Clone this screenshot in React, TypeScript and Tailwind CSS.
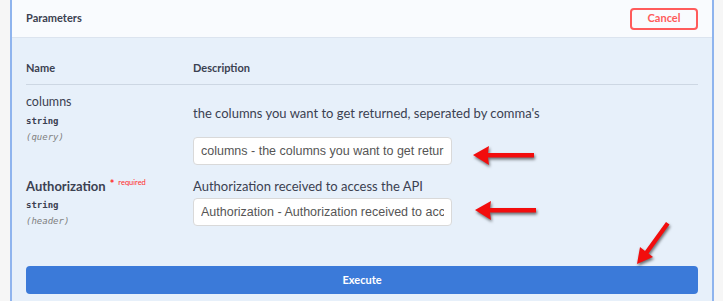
import React from "react";

const sans = "font-['Lato','Open_Sans',sans-serif]";
const mono = "font-['DejaVu_Sans_Mono','Liberation_Mono',monospace]";

function Arrow({ className, d }: { className: string; d: string }) {
  return (
    <svg
      className={`absolute ${className}`}
      viewBox="0 0 80 60"
      width="80"
      height="60"
      style={{ filter: "drop-shadow(1px 2px 1.5px rgba(0,0,0,0.55))" }}
    >
      <path d={d} fill="#f20d0d" />
    </svg>
  );
}

function ParamRow({
  name,
  required,
  type,
  location,
  description,
  value,
  descGap,
}: {
  name: string;
  required?: boolean;
  type: string;
  location: string;
  description: string;
  value: string;
  descGap: string;
}) {
  return (
    <div className="grid grid-cols-[167px_1fr]">
      <div>
        <div className={`${sans} flex items-start text-[12.5px] leading-[18px] text-[#3b4151] ${required ? "font-bold text-[13px]" : ""}`}>
          {name}
          {required && (
            <span className="ml-[4px] flex items-start text-[#ff2b2b]">
              <span className="text-[11px] leading-[14px]">*</span>
              <span className="ml-[4px] text-[7.5px] font-normal leading-[12px]">required</span>
            </span>
          )}
        </div>
        <div className={`${mono} mt-[3px] text-[9px] font-bold leading-[14px] text-[#3b4151]`}>{type}</div>
        <div className={`${mono} mt-[2px] text-[9px] italic leading-[14px] text-[#808080]`}>({location})</div>
      </div>
      <div>
        <div className={`${sans} ${descGap} text-[13px] leading-[18px] text-[#3b4151]`}>{description}</div>
        <input
          readOnly
          value={value}
          className="mt-[3px] h-[28px] w-[259px] rounded-[4px] border border-[#d9d9d9] bg-white px-[7px] font-['Liberation_Sans',Arial,sans-serif] text-[12.5px] text-[#555] outline-none"
        />
      </div>
    </div>
  );
}

export default function App() {
  return (
    <div className="relative flex h-[301px] w-[723px] overflow-hidden bg-[#f6f6f6] pl-[10px] pr-[9px]">
      <div className="flex flex-1 flex-col border-x-2 border-[#8fb4ee]">
        <div className="flex h-[38px] items-center justify-between border-b border-[#dce4ef] bg-[#f9fbfe] pl-[14px] pr-[14px]">
          <span className={`${sans} text-[11px] font-bold text-[#3b4151]`}>Parameters</span>
          <button
            className={`${sans} h-[22px] w-[68px] rounded-[4px] border-2 border-[#ff5b5b] text-[11px] font-bold text-[#ff5b5b]`}
          >
            Cancel
          </button>
        </div>
        <div className="flex-1 bg-[#e7f0fa] px-[14px]">
          <div className={`${sans} mt-[22px] grid grid-cols-[167px_1fr] border-b border-[#cdd7e3] pb-[8px] text-[11px] font-bold leading-[16px] text-[#3b4151]`}>
            <span>Name</span>
            <span>Description</span>
          </div>
          <div className="mt-[8px]">
            <ParamRow
              name="columns"
              type="string"
              location="query"
              description="the columns you want to get returned, seperated by comma's"
              value="columns - the columns you want to get returned"
              descGap="mt-[11px] mb-[12px]"
            />
          </div>
          <div className="mt-[12px]">
            <ParamRow
              name="Authorization"
              required
              type="string"
              location="header"
              description="Authorization received to access the API"
              value="Authorization - Authorization received to access the API"
              descGap=""
            />
          </div>
          <button
            className={`${sans} mt-[38px] h-[28px] w-full rounded-[4px] bg-[#3b7ad9] text-[11px] font-bold text-white`}
          >
            Execute
          </button>
        </div>
      </div>
      <Arrow className="left-[468px] top-[141px]" d="M5 14 L21 5 L20 12 L66 12 L66 16.5 L20 16.5 L21 24 Z" />
      <Arrow className="left-[470px] top-[196px]" d="M5 14 L21 5 L20 12 L66 12 L66 16.5 L20 16.5 L21 24 Z" />
      <Arrow className="left-[630px] top-[218px]" d="M7 46 L10 29 L15 33 L36 4 L39.5 6.5 L18.5 35.5 L23 39 Z" />
    </div>
  );
}
